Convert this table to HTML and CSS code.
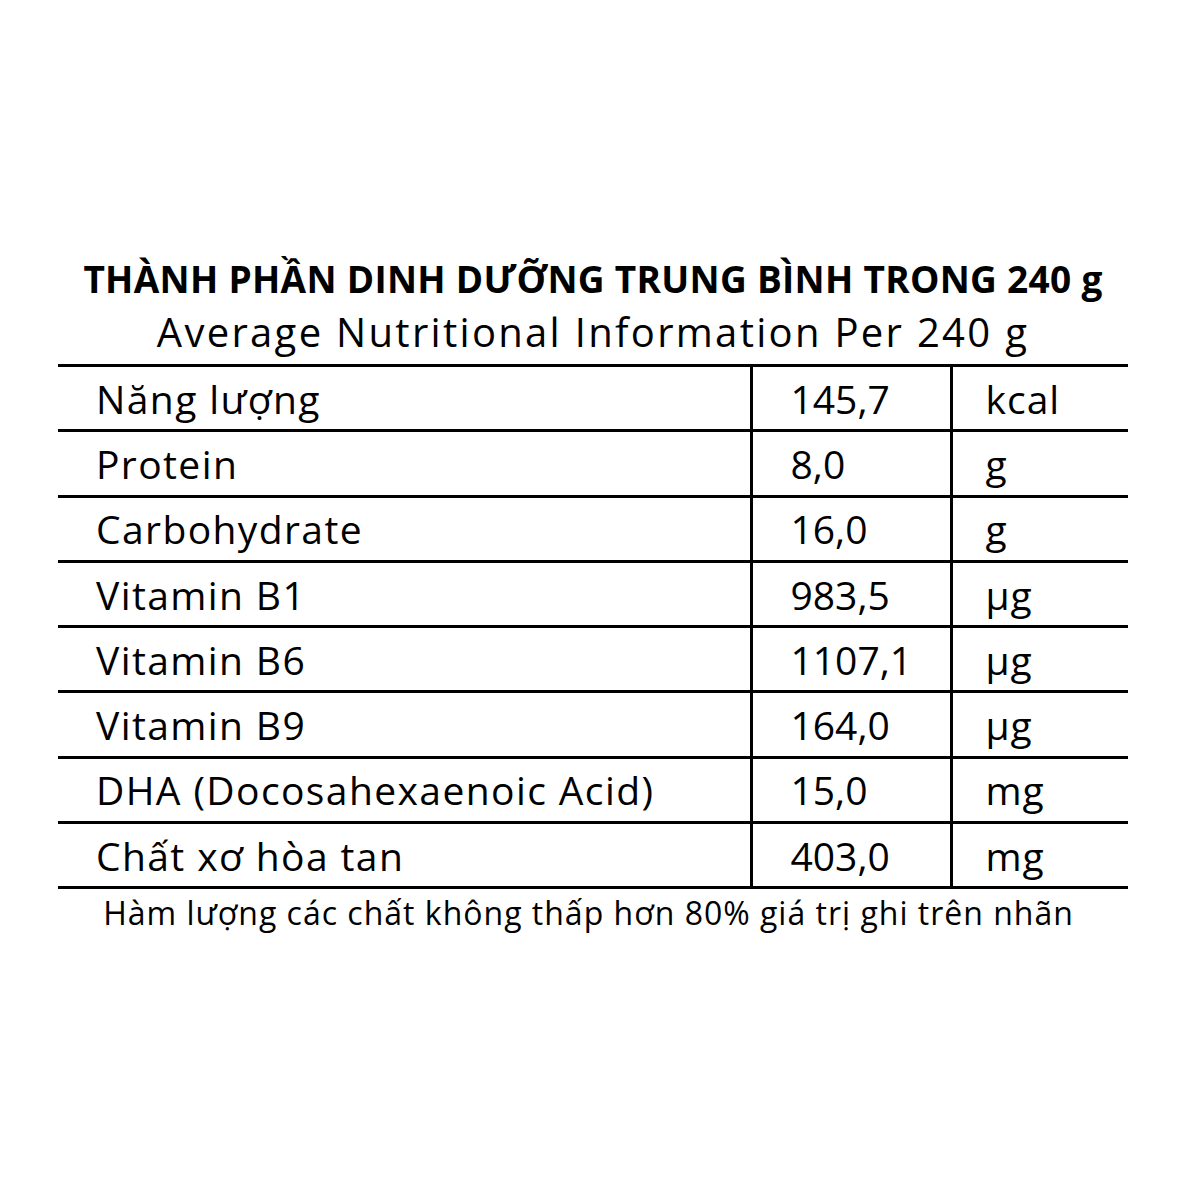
FILE: index.html
```html
<!DOCTYPE html>
<html lang="vi">
<head>
<meta charset="utf-8">
<link rel="stylesheet" href="styles.css">
</head>
<body>
<main class="panel">
  <h1 class="title">THÀNH PHẦN DINH DƯỠNG TRUNG BÌNH TRONG 240 g</h1>
  <p class="subtitle">Average Nutritional Information Per 240 g</p>
  <table class="facts">
    <colgroup><col class="c-name"><col class="c-val"><col class="c-unit"></colgroup>
    <tr><td class="name">Năng lượng</td><td class="val">145,7</td><td class="unit">kcal</td></tr>
    <tr><td class="name">Protein</td><td class="val">8,0</td><td class="unit">g</td></tr>
    <tr><td class="name">Carbohydrate</td><td class="val">16,0</td><td class="unit">g</td></tr>
    <tr><td class="name">Vitamin B1</td><td class="val">983,5</td><td class="unit">µg</td></tr>
    <tr><td class="name">Vitamin B6</td><td class="val">1107,1</td><td class="unit">µg</td></tr>
    <tr><td class="name">Vitamin B9</td><td class="val">164,0</td><td class="unit">µg</td></tr>
    <tr><td class="name">DHA (Docosahexaenoic Acid)</td><td class="val">15,0</td><td class="unit">mg</td></tr>
    <tr><td class="name">Chất xơ hòa tan</td><td class="val">403,0</td><td class="unit">mg</td></tr>
  </table>
  <p class="note">Hàm lượng các chất không thấp hơn 80% giá trị ghi trên nhãn</p>
</main>
</body>
</html>
```
FILE: styles.css
```css
html, body {
  margin: 0;
  padding: 0;
  background: #fff;
}
body {
  font-family: "Open Sans", "Noto Sans", sans-serif;
  color: #000;
}
.panel {
  width: 1070px;
  margin-left: 58px;
  padding-top: 254px;
  display: flex;
  flex-direction: column;
  align-items: center;
}
.title {
  margin: 0;
  font-size: 37px;
  font-weight: 700;
  line-height: 50px;
  letter-spacing: 0.3px;
  white-space: nowrap;
}
.subtitle {
  margin: 1px 0 0;
  font-size: 40px;
  font-weight: 400;
  line-height: 54px;
  letter-spacing: 2.3px;
  white-space: nowrap;
}
.facts {
  width: 1070px;
  margin-top: 5px;
  border-collapse: collapse;
  table-layout: fixed;
  font-size: 39px;
}
.c-name { width: 693px; }
.c-val { width: 200px; }
.c-unit { width: 177px; }
.facts td {
  border-top: 3px solid #000;
  border-bottom: 3px solid #000;
  height: 62.3px;
  padding: 0;
  vertical-align: middle;
  white-space: nowrap;
}
.facts .name {
  padding-left: 38px;
  letter-spacing: 1.4px;
  border-right: 3px solid #000;
}
.facts .val {
  padding-left: 38px;
  border-right: 3px solid #000;
}
.facts .unit {
  padding-left: 33px;
  letter-spacing: 1px;
}
.note {
  margin: 4px 0 0;
  padding-right: 9px;
  font-size: 32px;
  line-height: 40px;
  letter-spacing: 1px;
  white-space: nowrap;
}
```
